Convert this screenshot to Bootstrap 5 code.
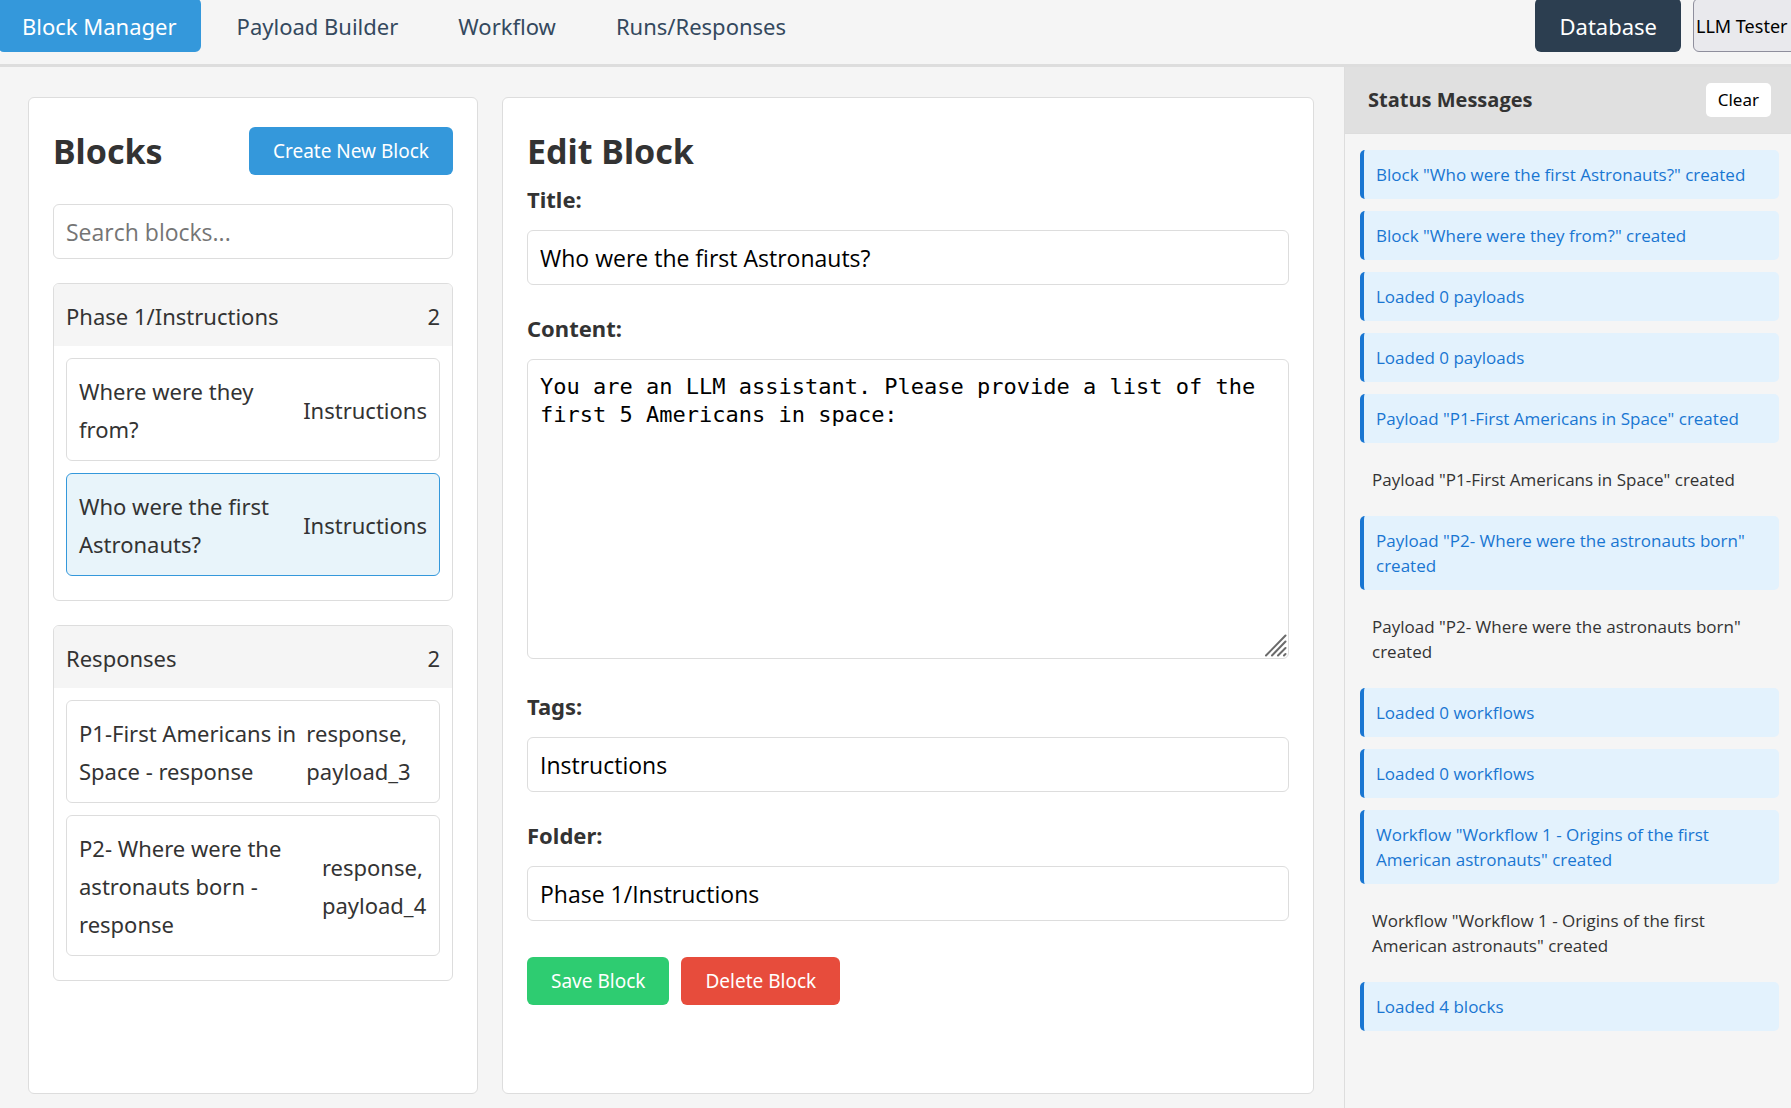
<!DOCTYPE html>
<html lang="en">
<head>
<meta charset="utf-8">
<meta name="viewport" content="width=device-width, initial-scale=1">
<title>Block Manager</title>
<link href="https://cdn.jsdelivr.net/npm/bootstrap@5.3.0/dist/css/bootstrap.min.css" rel="stylesheet">
<style>
  :root { --line: #ddd; --blue: #3498db; --navy: #2c3e50; --ui: "Noto Sans", "Open Sans", sans-serif; --text: "Open Sans", "Noto Sans", sans-serif; }
  body { background: #f5f5f5; color: #333; font-family: var(--ui); font-size: 22px; line-height: 38px; }
  button, input { font-family: var(--ui); }
  .app-bar { height: 67px; border-bottom: 3px solid var(--line); }
  .bar-inner { margin: -2px -6px 0 -2px; }
  .tab-link { padding: 9px 24px 7px; border-radius: 6px; border: 0; background: none; color: #34495e; font-size: 22px; line-height: 38px; text-decoration: none; }
  .tab-link.active { background: var(--blue); color: #fff; }
  .tab-link.db { background: var(--navy); color: #fff; }
  .llm-btn { width: 104px; border: 1px solid #8f8f9d; border-radius: 6px; background: #e9e9ed; color: #000; font-size: 18px; padding: 2px 2px 0; text-align: left; white-space: nowrap; }
  .bar-gap { gap: 12px; }
  .work-area { padding: 30px 30px 14px 28px; gap: 24px; }
  .panel-box { background: #fff; border: 1px solid var(--line); border-radius: 6px; padding: 24px; }
  .list-col { width: 450px; }
  .panel-title { font-size: 34px; font-weight: 700; line-height: 58px; margin: 0; }
  .act-btn { border: 0; border-radius: 6px; color: #fff; font-size: 19px; line-height: 24px; padding: 12px 24px; white-space: nowrap; }
  .act-blue { background: var(--blue); } .act-green { background: #2ecc71; } .act-red { background: #e74c3c; }
  .text-field { display: block; width: 100%; height: 55px; border: 1px solid var(--line); border-radius: 6px; padding: 0 12px; color: #000; font-family: var(--text); font-size: 23px; background: #fff; }
  .text-field::placeholder { color: #757575; opacity: 1; }
  .search-field { margin: 24px 0; }
  .folder-box { border: 1px solid var(--line); border-radius: 6px; overflow: hidden; margin-bottom: 24px; }
  .folder-head { background: #f5f5f5; padding: 13px 12px 11px; }
  .folder-items { padding: 12px; }
  .block-item { border: 1px solid var(--line); border-radius: 6px; padding: 13px 12px 12px; margin-bottom: 12px; }
  .block-item.selected { background: #e8f4fa; border-color: var(--blue); }
  .field-label { display: block; font-weight: 700; margin-bottom: 12px; }
  .field-group { margin-bottom: 24px; }
  .content-wrap { margin-bottom: 28px; }
  .content-field { height: 300px; padding: 13px 12px; resize: none; font-family: "DejaVu Sans Mono", monospace; font-size: 22px; line-height: 28px; }
  .grip { right: 2px; bottom: 2px; pointer-events: none; }
  .form-actions { gap: 12px; padding-top: 12px; }
  .status-col { width: 447px; border-left: 1px solid var(--line); }
  .status-head { height: 67px; background: #e0e0e0; border-bottom: 1px solid var(--line); padding: 0 20px 0 23px; }
  .status-title { font-family: var(--text); font-size: 20px; font-weight: 700; line-height: 32px; margin: 0; }
  .clear-btn { border: 0; border-radius: 5px; background: #fff; color: #000; font-size: 17px; line-height: 22px; padding: 6px 12px; }
  .status-list { gap: 12px; padding: 16px 12px 0 15px; margin: 0; font-family: var(--text); font-size: 17px; line-height: 25px; }
  .status-msg { padding: 12px; border-radius: 5px; }
  .status-msg.info { background: #e3f2fd; color: #1976d2; border-left: 4px solid #1976d2; }
</style>
<script src="https://cdn.jsdelivr.net/npm/bootstrap@5.3.0/dist/js/bootstrap.bundle.min.js"></script>
</head>
<body>
<div class="d-flex flex-column min-vh-100 overflow-hidden">
  <header class="app-bar">
    <div class="bar-inner d-flex justify-content-between">
      <nav class="d-flex bar-gap">
        <a class="tab-link active" href="#" aria-current="page">Block Manager</a>
        <a class="tab-link" href="#">Payload Builder</a>
        <a class="tab-link" href="#">Workflow</a>
        <a class="tab-link" href="#">Runs/Responses</a>
      </nav>
      <div class="d-flex bar-gap">
        <button type="button" class="tab-link db">Database</button>
        <button type="button" class="llm-btn">LLM Tester</button>
      </div>
    </div>
  </header>
  <div class="d-flex flex-grow-1">
    <main class="work-area d-flex flex-grow-1">
      <section class="panel-box list-col flex-shrink-0">
        <div class="d-flex justify-content-between align-items-center">
          <h2 class="panel-title">Blocks</h2>
          <button type="button" class="act-btn act-blue">Create New Block</button>
        </div>
        <input type="search" class="text-field search-field" placeholder="Search blocks..." aria-label="Search blocks">
        <div class="folder-box">
          <div class="folder-head d-flex justify-content-between"><span>Phase 1/Instructions</span><span>2</span></div>
          <div class="folder-items">
            <div class="block-item d-flex justify-content-between align-items-center"><span>Where were they from?</span><span>Instructions</span></div>
            <div class="block-item selected d-flex justify-content-between align-items-center"><span>Who were the first Astronauts?</span><span>Instructions</span></div>
          </div>
        </div>
        <div class="folder-box">
          <div class="folder-head d-flex justify-content-between"><span>Responses</span><span>2</span></div>
          <div class="folder-items">
            <div class="block-item d-flex justify-content-between align-items-center"><span>P1-First Americans in Space - response</span><span>response, payload_3</span></div>
            <div class="block-item d-flex justify-content-between align-items-center"><span>P2- Where were the astronauts born - response</span><span>response, payload_4</span></div>
          </div>
        </div>
      </section>
      <section class="panel-box flex-grow-1">
        <h2 class="panel-title">Edit Block</h2>
        <form>
          <div class="field-group">
            <label class="field-label" for="title">Title:</label>
            <input id="title" type="text" class="text-field" value="Who were the first Astronauts?">
          </div>
          <div class="content-wrap">
            <label class="field-label" for="content">Content:</label>
            <div class="position-relative">
              <textarea id="content" class="text-field content-field" spellcheck="false">You are an LLM assistant. Please provide a list of the first 5 Americans in space:</textarea>
              <svg class="grip position-absolute" width="24" height="24" viewBox="0 0 24 24" fill="none" stroke="#6b6b6b" stroke-width="2" stroke-linecap="round" aria-hidden="true"><path d="M3 22.500 22.500 2.500M9 22.500l13.500-14M15 22.500l7.500-7.500M21 22.500l1.500-1.500"/></svg>
            </div>
          </div>
          <div class="field-group">
            <label class="field-label" for="tags">Tags:</label>
            <input id="tags" type="text" class="text-field" value="Instructions">
          </div>
          <div class="field-group">
            <label class="field-label" for="folder">Folder:</label>
            <input id="folder" type="text" class="text-field" value="Phase 1/Instructions">
          </div>
          <div class="form-actions d-flex">
            <button type="button" class="act-btn act-green">Save Block</button>
            <button type="button" class="act-btn act-red">Delete Block</button>
          </div>
        </form>
      </section>
    </main>
    <aside class="status-col flex-shrink-0">
      <div class="status-head d-flex justify-content-between align-items-center">
        <h3 class="status-title">Status Messages</h3>
        <button type="button" class="clear-btn">Clear</button>
      </div>
      <ul class="status-list list-unstyled d-flex flex-column">
        <li class="status-msg info">Block "Who were the first Astronauts?" created</li>
        <li class="status-msg info">Block "Where were they from?" created</li>
        <li class="status-msg info">Loaded 0 payloads</li>
        <li class="status-msg info">Loaded 0 payloads</li>
        <li class="status-msg info">Payload "P1-First Americans in Space" created</li>
        <li class="status-msg">Payload "P1-First Americans in Space" created</li>
        <li class="status-msg info">Payload "P2- Where were the astronauts born" created</li>
        <li class="status-msg">Payload "P2- Where were the astronauts born" created</li>
        <li class="status-msg info">Loaded 0 workflows</li>
        <li class="status-msg info">Loaded 0 workflows</li>
        <li class="status-msg info">Workflow "Workflow 1 - Origins of the first American astronauts" created</li>
        <li class="status-msg">Workflow "Workflow 1 - Origins of the first American astronauts" created</li>
        <li class="status-msg info">Loaded 4 blocks</li>
      </ul>
    </aside>
  </div>
</div>
</body>
</html>
